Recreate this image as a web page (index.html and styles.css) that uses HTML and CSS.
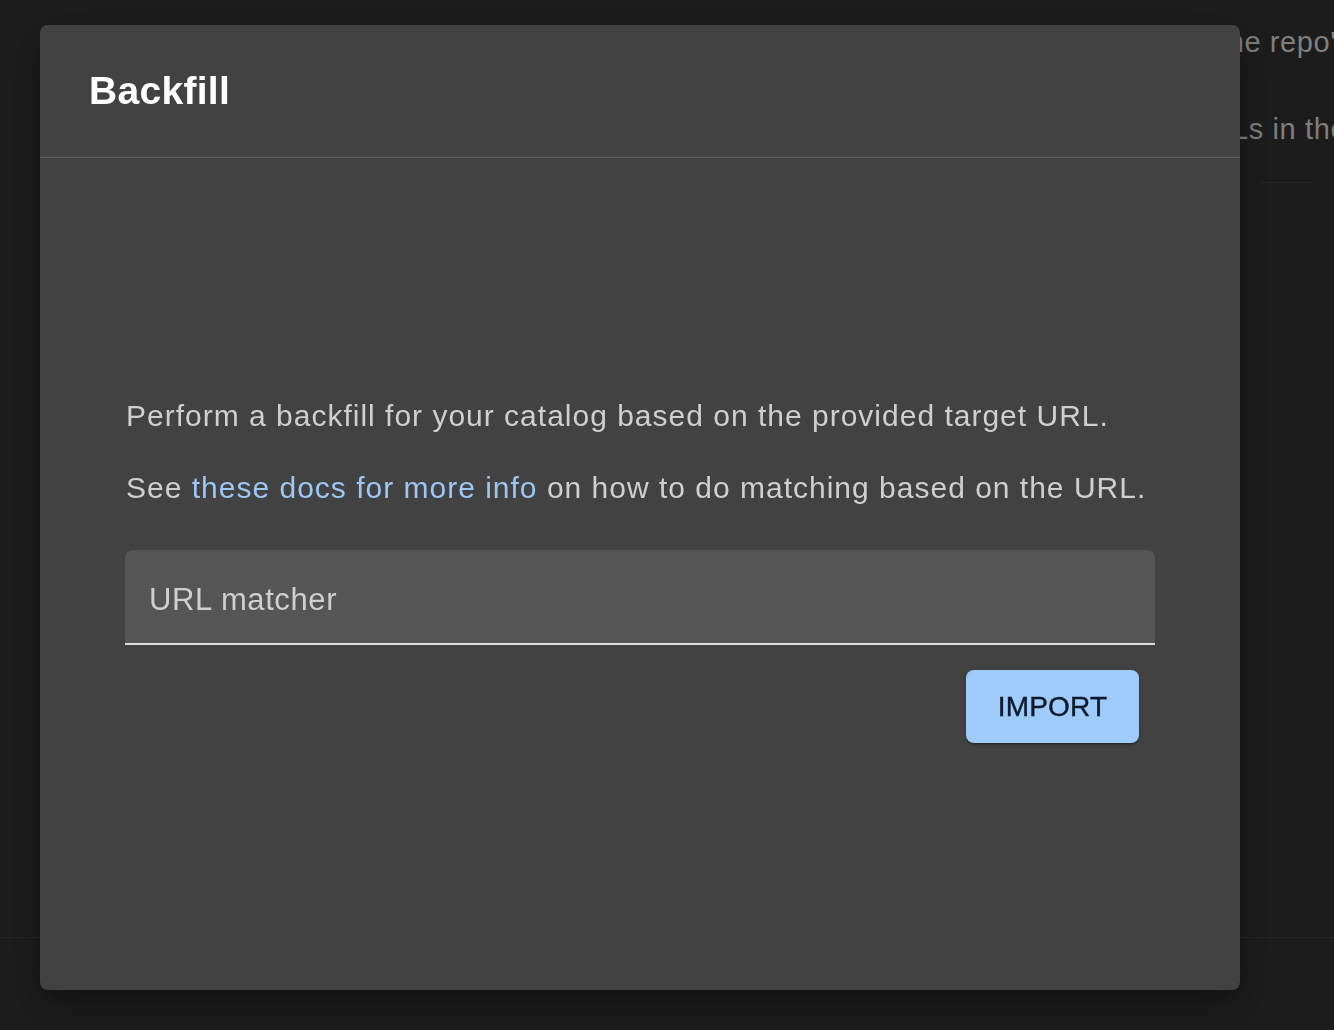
FILE: index.html
```html
<!DOCTYPE html>
<html>
<head>
<meta charset="utf-8">
<link rel="stylesheet" href="styles.css">
</head>
<body>
<div class="page">
  <div class="page-col">
    <p class="page-line line-a">the repo's</p>
    <p class="page-line line-b">URLs in the</p>
    <div class="page-rule"></div>
  </div>
  <div class="page-footer-rule"></div>
</div>
<div class="backdrop"></div>
<div class="dialog" role="dialog">
  <header class="dialog-header">
    <h2 class="dialog-title">Backfill</h2>
  </header>
  <div class="dialog-body">
    <p class="desc">Perform a backfill for your catalog based on the provided target URL.</p>
    <p class="desc desc-2">See <a class="link" href="#">these docs for more info</a> on how to do matching based on the URL.</p>
    <div class="field">
      <span class="field-label">URL matcher</span>
    </div>
    <div class="actions">
      <button class="btn">IMPORT</button>
    </div>
  </div>
</div>
</body>
</html>
```
FILE: styles.css
```css
html, body {
  margin: 0;
  padding: 0;
  height: 100%;
}
body {
  background: #202020;
  font-family: "Liberation Sans", Arial, sans-serif;
  overflow: hidden;
}
.page {
  height: 1030px;
  display: flex;
  flex-direction: column;
  position: relative;
  overflow: hidden;
}
.page-col {
  white-space: nowrap;
}
.page-line {
  margin: 0;
  font-size: 29px;
  line-height: 40px;
  letter-spacing: 0.6px;
  color: #8e8e8e;
}
.line-a {
  margin-top: 22px;
  margin-left: 1219px;
}
.line-b {
  margin-top: 47px;
  margin-left: 1189px;
}
.page-rule {
  margin-top: 33px;
  margin-left: 1262px;
  width: 50px;
  height: 1px;
  background: #2e2e2e;
}
.page-footer-rule {
  margin-top: 754px;
  height: 1px;
  background: #2a2a2a;
}
.backdrop {
  position: fixed;
  inset: 0;
  background: rgba(0, 0, 0, 0.1);
}
.dialog {
  position: fixed;
  top: 25px;
  left: 40px;
  width: 1200px;
  height: 965px;
  background: #424242;
  border-radius: 8px;
  box-shadow: 0 11px 15px -7px rgba(0,0,0,0.2), 0 24px 38px 3px rgba(0,0,0,0.14), 0 9px 46px 8px rgba(0,0,0,0.12);
  display: flex;
  flex-direction: column;
  overflow: hidden;
}
.dialog-header {
  height: 133px;
  border-bottom: 1px solid #5e5e5e;
  display: flex;
  align-items: center;
  padding-left: 49px;
  box-sizing: border-box;
}
.dialog-title {
  margin: 0;
  font-size: 39px;
  font-weight: 700;
  color: #ffffff;
  line-height: 46px;
  letter-spacing: 0.3px;
}
.dialog-body {
  flex: 1;
  padding: 237px 85px 0 86px;
  display: flex;
  flex-direction: column;
}
.desc {
  margin: 0;
  font-size: 30px;
  line-height: 42px;
  letter-spacing: 1px;
  color: #cfcfcf;
  white-space: nowrap;
}
.desc-2 {
  margin-top: 30px;
}
.link {
  color: #9cc6f4;
  text-decoration: none;
}
.field {
  margin-top: 41px;
  height: 95px;
  background: #555555;
  border-radius: 8px 8px 0 0;
  border-bottom: 2px solid #e0e0e0;
  box-sizing: border-box;
  display: flex;
  align-items: center;
  padding-left: 24px;
  margin-left: -1px;
}
.field-label {
  font-size: 31px;
  letter-spacing: 0.6px;
  color: #cfcfcf;
  margin-top: 6px;
}
.actions {
  display: flex;
  justify-content: flex-end;
  padding-right: 16px;
  margin-top: 25px;
}
.btn {
  height: 73px;
  width: 173px;
  border: none;
  border-radius: 8px;
  background: #9fcbfa;
  color: #0c1a2c;
  font-family: "Liberation Sans", Arial, sans-serif;
  font-size: 28px;
  font-weight: 400;
  letter-spacing: 0.2px;
  -webkit-text-stroke: 0.4px #0c1a2c;
  box-shadow: 0 3px 1px -2px rgba(0,0,0,0.2), 0 2px 2px 0 rgba(0,0,0,0.14), 0 1px 5px 0 rgba(0,0,0,0.12);
  padding: 0;
}
```
